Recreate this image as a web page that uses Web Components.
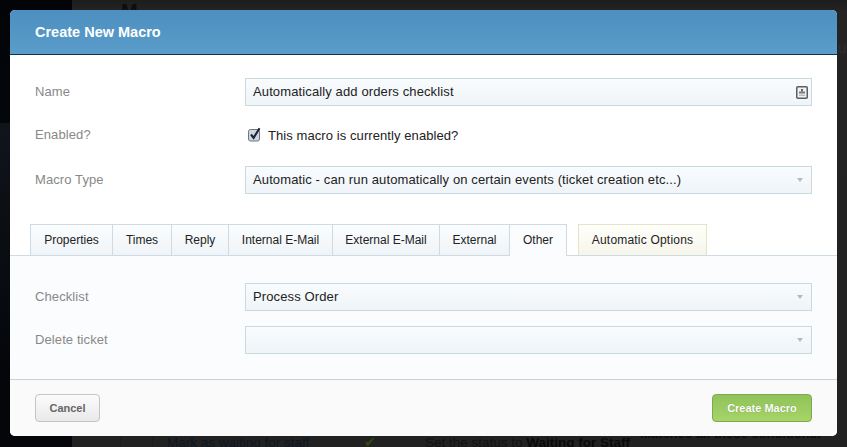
<!DOCTYPE html>
<html>
<head>
<meta charset="utf-8">
<title>Create New Macro</title>
<style>
html, body { margin: 0; padding: 0; height: 100%; }
body { background: #222; overflow: hidden; font-family: "Liberation Sans", Arial, sans-serif; }
</style>
</head>
<body>
<macro-backdrop>
  <macro-modal heading="Create New Macro">
    <form-row label="Name" height="28" top="23">
      <text-field value="Automatically add orders checklist" icon></text-field>
    </form-row>
    <form-row label="Enabled?" height="18" top="20">
      <check-field>This macro is currently enabled?</check-field>
    </form-row>
    <form-row label="Macro Type" height="28" top="22">
      <text-field value="Automatic - can run automatically on certain events (ticket creation etc...)" arrow></text-field>
    </form-row>
    <macro-tabs slot="tabs"></macro-tabs>
    <form-row slot="pane" label="Checklist" height="28" top="27">
      <text-field value="Process Order" arrow></text-field>
    </form-row>
    <form-row slot="pane" label="Delete ticket" height="28" top="15">
      <text-field value="" arrow></text-field>
    </form-row>
  </macro-modal>
</macro-backdrop>
<script>
class MacroBackdrop extends HTMLElement {
  constructor () {
    super()
    this.attachShadow({ mode: 'open' }).innerHTML = `
<style>
:host { display: block; position: relative; width: 847px; height: 447px; overflow: hidden;
  background: linear-gradient(#1d1d1d, #242424 12px, #212121 100%); }
.side { position: absolute; left: 0; top: 0; bottom: 0; width: 72px;
  background: linear-gradient(#020408 0, #03060a 123px, #10151b 123px, #04060a 370px); }
.rule { position: absolute; top: 436px; bottom: 0; width: 1px; background: #1c1c1c; }
.behind { position: absolute; font: 13.5px/14px "Liberation Sans", Arial, sans-serif; color: #0e1623; white-space: nowrap; }
.wrap { padding: 10px 10px 11px; box-sizing: border-box; height: 447px; position: relative; }
</style>
<div class="side"></div>
<div class="rule" style="left:120px"></div>
<div class="rule" style="left:152px"></div>
<div class="behind" style="left:121px;top:1px;font-size:20px;line-height:20px;font-weight:bold;color:#0b0d10">M</div>
<div class="behind" style="left:838px;top:41px;font-size:15px;color:#2f2f2f">up</div>
<div class="behind" style="left:167px;top:436px">Mark as waiting for staff</div>
<div class="behind" style="left:364px;top:436px;color:#2c4a12;">&#10004;</div>
<div class="behind" style="left:425px;top:436px;color:#111">Set the status to <b style="color:#0a0a0a">Waiting for Staff</b></div>
<div class="behind" style="left:640px;top:427px;font-weight:bold;color:#0c0c0c;font-size:13px">Matches all these conditions:</div>
<div class="wrap"><slot></slot></div>`
  }
}
customElements.define('macro-backdrop', MacroBackdrop)

class MacroModal extends HTMLElement {
  constructor () {
    super()
    this.attachShadow({ mode: 'open' }).innerHTML = `
<style>
:host { display: flex; flex-direction: column; height: 426px; border-radius: 5px; overflow: hidden; background: #fff; color: #222; }
header { height: 44px; flex: none; box-sizing: content-box; border-bottom: 1px solid #12314f;
  background: linear-gradient(#4c8fc0, #5a9dca); color: #fff; font-size: 14.5px; font-weight: bold;
  display: flex; align-items: center; padding-left: 25px; }
.top { flex: none; height: 201px; display: flex; flex-direction: column; position: relative; }
.fields { flex: 1; }
.tabs { flex: none; }
.pane { flex: none; height: 123px; background: #fbfcfe; border-bottom: 1px solid #d0d0d0; }
footer { flex: 1; background: #fafafa; display: flex; justify-content: space-between; padding: 14px 25px 0; }
.btn { box-sizing: border-box; height: 28px; border-radius: 4px; font-size: 11px; font-weight: bold; display: flex; align-items: center; justify-content: center; }
.cancel { width: 65px; border: 1px solid #c4c4c4; background: linear-gradient(#fbfbfb, #e9e9e9); color: #666; }
.create { width: 100px; border: 1px solid #7fa94b; background: linear-gradient(#8fc35a, #a7d468); color: #fff; text-shadow: 0 0 1px rgba(60,90,20,.5); }
</style>
<header></header>
<div class="top">
  <div class="fields"><slot></slot></div>
  <div class="tabs"><slot name="tabs"></slot></div>
</div>
<div class="pane"><slot name="pane"></slot></div>
<footer>
  <div class="btn cancel">Cancel</div>
  <div class="btn create">Create Macro</div>
</footer>`
    this.shadowRoot.querySelector('header').textContent = this.getAttribute('heading')
  }
}
customElements.define('macro-modal', MacroModal)

class FormRow extends HTMLElement {
  constructor () {
    super()
    this.attachShadow({ mode: 'open' }).innerHTML = `
<style>
:host { display: flex; align-items: center; padding: 0 25px; }
label { width: 210px; flex: none; color: #888; font-size: 13px; letter-spacing: .1px; padding-bottom: 2px; }
.field { flex: 1; min-width: 0; }
</style>
<label></label>
<div class="field"><slot></slot></div>`
    this.shadowRoot.querySelector('label').textContent = this.getAttribute('label')
    this.style.marginTop = this.getAttribute('top') + 'px'
    this.style.height = this.getAttribute('height') + 'px'
  }
}
customElements.define('form-row', FormRow)

class TextField extends HTMLElement {
  constructor () {
    super()
    this.attachShadow({ mode: 'open' }).innerHTML = `
<style>
:host { display: flex; align-items: center; box-sizing: border-box; height: 28px; padding: 0 8px 0 7px;
  border: 1px solid #cbd8de; background: linear-gradient(#f9fcfe, #eff4f8); color: #222; font-size: 13px; letter-spacing: .12px; }
span { flex: 1; white-space: nowrap; padding-bottom: 2px; }
.arrow { width: 0; height: 0; flex: none; border: 3.5px solid transparent; border-top: 4px solid #b3bcc3; border-bottom: 0; }
svg { flex: none; display: block; }
</style>
<span></span>`
    this.shadowRoot.querySelector('span').textContent = this.getAttribute('value')
    if (this.hasAttribute('arrow')) {
      const a = document.createElement('div')
      a.className = 'arrow'
      this.shadowRoot.appendChild(a)
    }
    if (this.hasAttribute('icon')) {
      this.style.paddingRight = '3px'
      this.shadowRoot.querySelector('span').insertAdjacentHTML('afterend', `
<svg width="12" height="13" viewBox="0 0 12 13">
  <rect x=".75" y=".75" width="10.5" height="11.5" rx="1" fill="#eef0f2" stroke="#5a5f63" stroke-width="1.5"/>
  <rect x="5" y="3" width="2" height="2.5" fill="#666"/>
  <rect x="3" y="5.5" width="6" height="2" fill="#777"/>
  <rect x="3" y="8.5" width="6" height="1.5" fill="#bbb"/>
</svg>`)
    }
  }
}
customElements.define('text-field', TextField)

class CheckField extends HTMLElement {
  constructor () {
    super()
    this.attachShadow({ mode: 'open' }).innerHTML = `
<style>
:host { display: flex; align-items: center; gap: 7px; padding-left: 3px; color: #222; font-size: 13px; letter-spacing: .08px; }
svg { flex: none; display: block; margin-top: -1px; }
</style>
<svg width="13" height="15" viewBox="0 0 13 15">
  <rect x=".5" y="2.5" width="11" height="11.5" rx="2" fill="#cfd6e0" stroke="#6d7583"/>
  <path d="M3 7.5 L5.6 10.8 L11.5 1.2" fill="none" stroke="#1c2430" stroke-width="2.1"/>
</svg>
<slot></slot>`
  }
}
customElements.define('check-field', CheckField)

class MacroTabs extends HTMLElement {
  constructor () {
    super()
    const names = [['Properties', 83], ['Times', 60], ['Reply', 58], ['Internal E-Mail', 105], ['External E-Mail', 108], ['External', 71], ['Other', 58]]
    this.attachShadow({ mode: 'open' }).innerHTML = `
<style>
:host { display: flex; height: 31px; padding-left: 20px; border-bottom: 1px solid #cfdbe2; box-sizing: content-box; }
.tab { box-sizing: border-box; height: 31px; display: flex; align-items: center; justify-content: center;
  border: 1px solid #cfdbe2; border-bottom: 0; margin-right: -1px; font-size: 12px; color: #222;
  background: linear-gradient(#fbfdfe, #eff4f8); }
.on { background: #fbfcfe; height: 32px; padding-bottom: 1px; position: relative; z-index: 1; }
.auto { margin-left: 12px; letter-spacing: .2px; border-color: #e6e3c9; background: linear-gradient(#fffffb, #f6f5ea); }
</style>
${names.map(([n, w]) => `<div class="tab${n === 'Other' ? ' on' : ''}" style="width:${w}px">${n}</div>`).join('')}
<div class="tab auto" style="width:129px">Automatic Options</div>`
  }
}
customElements.define('macro-tabs', MacroTabs)
</script>
</body>
</html>
